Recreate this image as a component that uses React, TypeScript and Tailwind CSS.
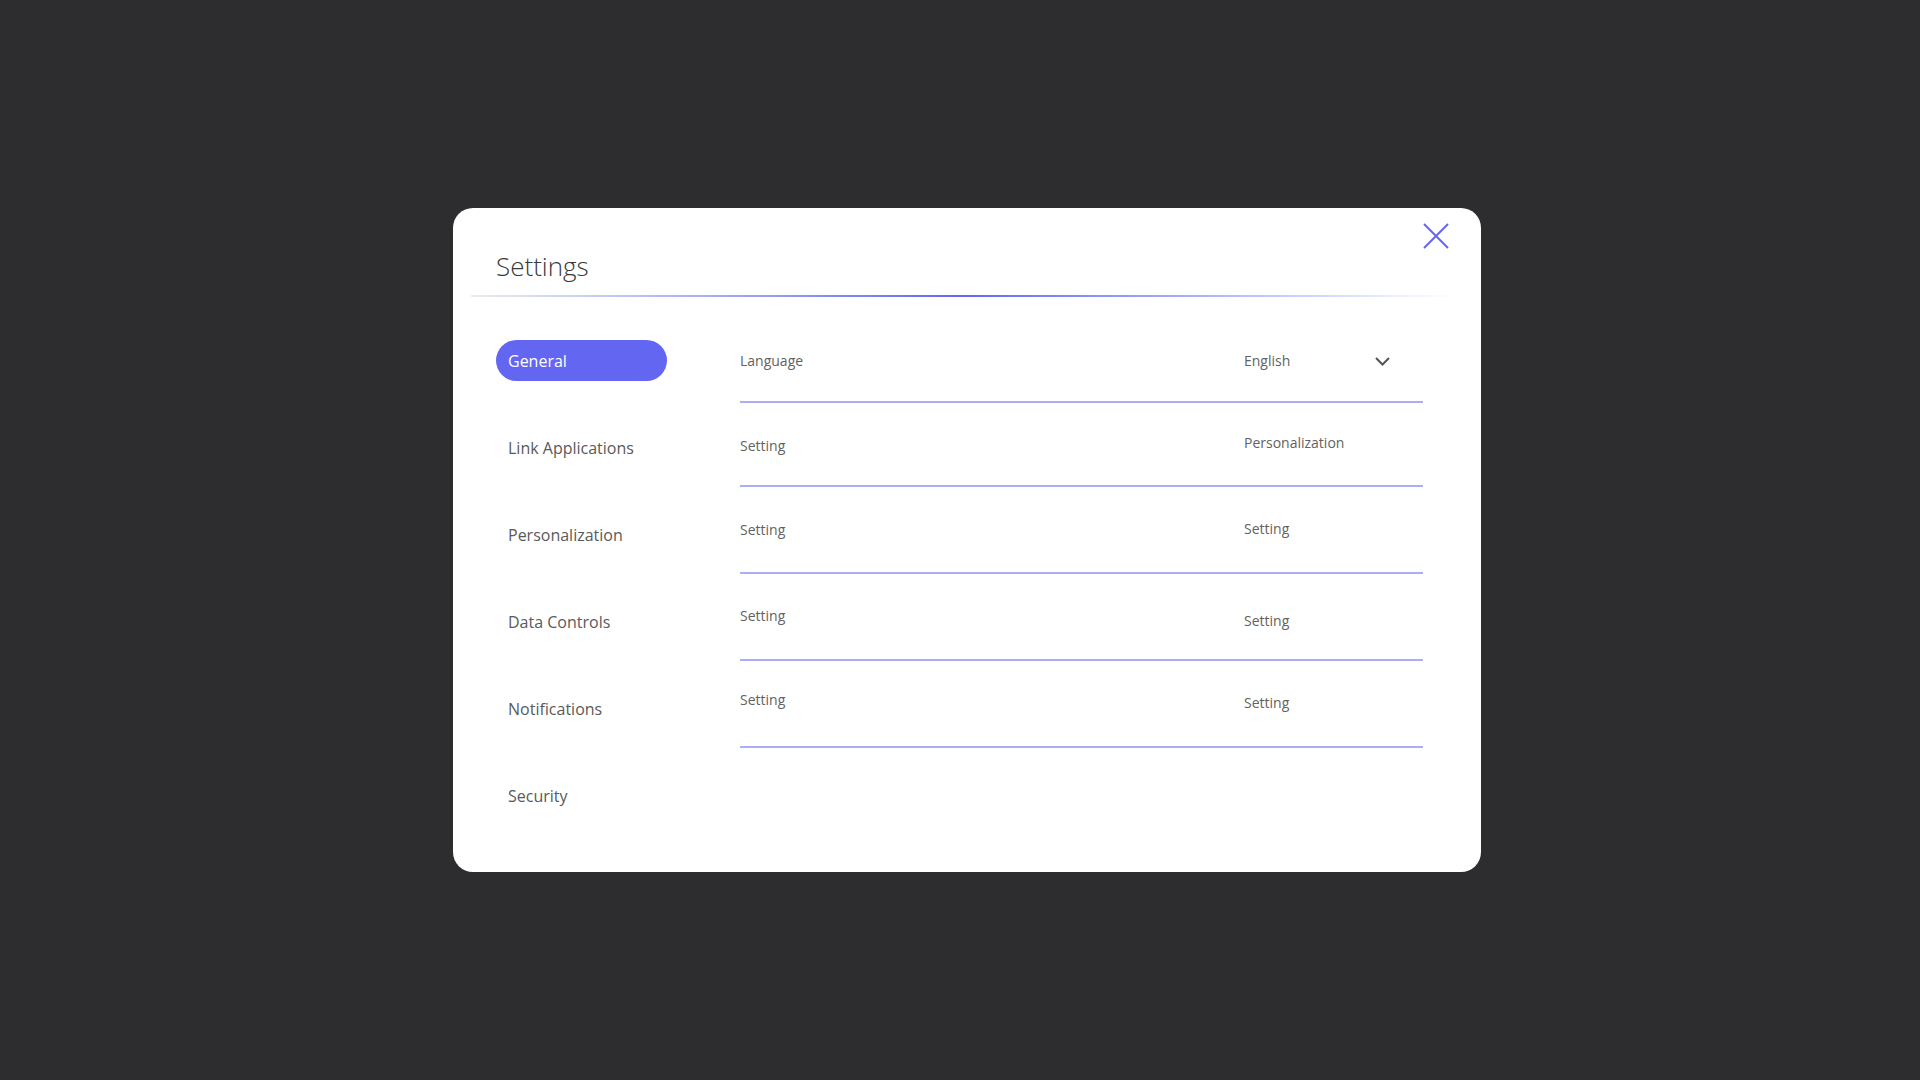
import React from "react";

const MENU = [
	"General",
	"Link Applications",
	"Personalization",
	"Data Controls",
	"Notifications",
	"Security",
];

// label / value offsets copied from the mock, rows are not perfectly even
const ROWS = [
	{ label: "Setting", value: "Personalization", h: "h-[84px]", lt: "pt-[33px]", vt: "pt-[30px]" },
	{ label: "Setting", value: "Setting", h: "h-[87px]", lt: "pt-[33px]", vt: "pt-[32px]" },
	{ label: "Setting", value: "Setting", h: "h-[87px]", lt: "pt-[32px]", vt: "pt-[37px]" },
	{ label: "Setting", value: "Setting", h: "h-[87px]", lt: "pt-[29px]", vt: "pt-[32px]" },
];

const CloseIcon: React.FC = () => (
	<svg width="26" height="26" viewBox="0 0 26 26" fill="none">
		<path d="M1 1L25 25M25 1L1 25" stroke="#6366f1" strokeWidth="2" />
	</svg>
);

const Chevron: React.FC = () => (
	<svg width="15" height="9" viewBox="0 0 15 9" fill="none">
		<path d="M1 1L7.5 7.5L14 1" stroke="#555555" strokeWidth="2" />
	</svg>
);

const App: React.FC = () => {
	const active = "General";

	return (
		<div className="min-h-screen w-full bg-[#2d2d2f] pl-[453px] pt-[208px] font-['Open_Sans',sans-serif]">
			<div className="relative w-[1028px] h-[664px] bg-white rounded-[20px] flex flex-col">
				<button className="absolute top-[15px] right-[32px] outline-none">
					<CloseIcon />
				</button>

				<div className="pt-[40px] pl-[43px]">
					<h1 className="text-[26px] leading-[36px] font-light text-[#3a3a3a]">
						Settings
					</h1>
				</div>
				<div className="mt-[11px] ml-[18px] mr-[29px] h-[2px] bg-gradient-to-r from-[#ececec] via-[#6366f1] to-white"></div>

				<div className="mt-[43px] pl-[43px] flex">
					<div className="w-[171px] flex flex-col gap-[46px]">
						{MENU.map((item) => (
							<div
								key={item}
								className={
									item === active
										? "h-[41px] px-[12px] flex items-center rounded-full bg-[#6366f1] text-white text-[16px]"
										: "h-[41px] px-[12px] flex items-center text-[#5a5a5a] text-[16px]"
								}>
								{item}
							</div>
						))}
					</div>

					<div className="ml-[73px] w-[683px] flex flex-col text-[14px] leading-[20px] text-[#626262]">
						<div className="h-[63px] border-b-2 border-[#acadf7] flex items-start pt-[11px]">
							<span className="w-[504px]">Language</span>
							<div className="flex-1 h-[20px] flex items-center justify-between pr-[33px]">
								<span>English</span>
								<Chevron />
							</div>
						</div>
						{ROWS.map((row, i) => (
							<div key={i} className={`${row.h} border-b-2 border-[#acadf7] flex items-start`}>
								<span className={`w-[504px] ${row.lt}`}>{row.label}</span>
								<span className={`flex-1 ${row.vt}`}>{row.value}</span>
							</div>
						))}
					</div>
				</div>
			</div>
		</div>
	);
};

export default App;
